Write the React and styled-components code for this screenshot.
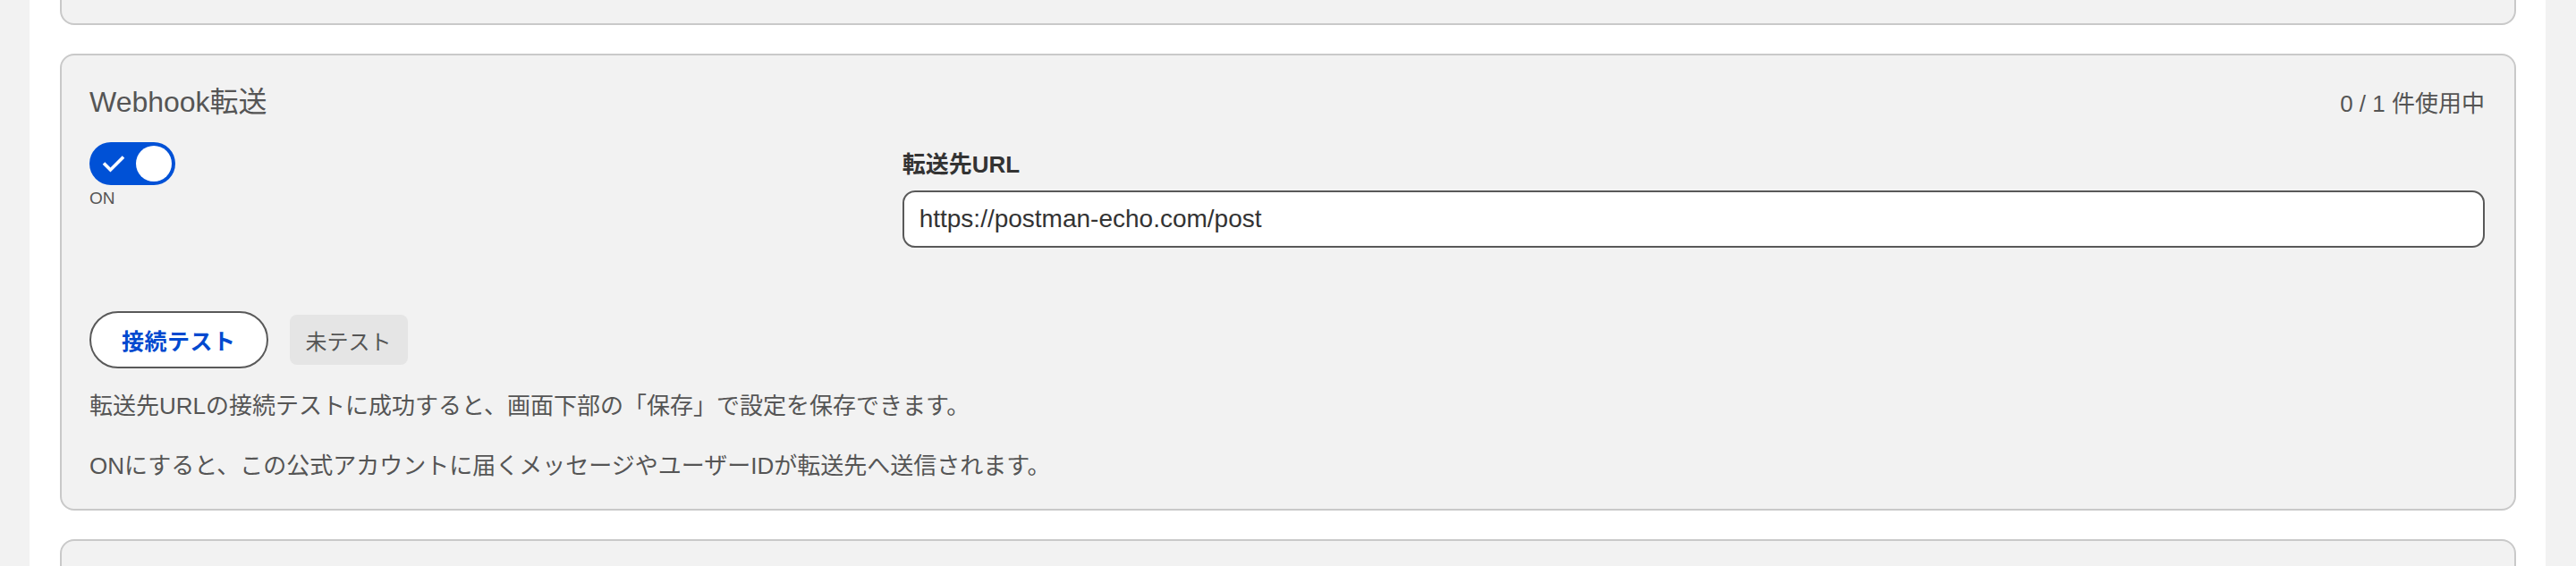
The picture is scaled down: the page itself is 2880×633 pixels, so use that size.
import React from "react";
import styled, { createGlobalStyle } from "styled-components";

const GlobalStyle = createGlobalStyle`
  html, body {
    margin: 0;
    padding: 0;
    background: #f2f2f2;
  }
  body {
    font-family: "Liberation Sans", "Noto Sans CJK JP", sans-serif;
    overflow: hidden;
  }
  * { box-sizing: border-box; }
`;

const Page = styled.div`
  height: 633px;
  padding: 0 34px 0 33px;
  background: #f2f2f2;
  overflow: hidden;
`;

const Panel = styled.main`
  height: 100%;
  background: #ffffff;
  padding: 0 33px 0 34px;
  display: flex;
  flex-direction: column;
  gap: 32px;
  overflow: hidden;
`;

const Card = styled.section`
  flex: none;
  background: #f2f2f2;
  border: 2px solid #c9c9c9;
  border-radius: 16px;
  padding: 32px 33px 32px 31px;
  ${(p) => (p.$clipped ? "height: 100px; margin-top: -72px;" : "")}
  ${(p) => (p.$peek ? "height: 200px;" : "")}
`;

const CardHeader = styled.header`
  display: flex;
  justify-content: space-between;
  align-items: baseline;
`;

const Title = styled.h2`
  margin: 0;
  font-size: 32px;
  line-height: 40px;
  font-weight: 400;
  color: #555555;
`;

const Usage = styled.span`
  font-size: 26px;
  line-height: 40px;
  color: #555555;
`;

const SettingsRow = styled.div`
  display: grid;
  grid-template-columns: 1fr 2fr;
  gap: 24px;
  margin-top: 23px;
`;

const ToggleColumn = styled.div`
  display: flex;
  flex-direction: column;
  align-items: flex-start;
  gap: 3px;
`;

const Switch = styled.button`
  width: 96px;
  height: 48px;
  border: none;
  border-radius: 24px;
  background: #0051d6;
  padding: 0 4px 0 14px;
  display: flex;
  align-items: center;
  justify-content: space-between;
  cursor: pointer;
`;

const Knob = styled.span`
  width: 40px;
  height: 40px;
  border-radius: 50%;
  background: #ffffff;
`;

const StateText = styled.span`
  font-size: 19px;
  line-height: 24px;
  color: #555555;
`;

const FieldColumn = styled.div`
  padding-top: 8px;
  display: flex;
  flex-direction: column;
  gap: 12px;
`;

const Label = styled.label`
  font-size: 26px;
  line-height: 34px;
  font-weight: 700;
  color: #333333;
`;

const UrlInput = styled.input`
  width: 100%;
  height: 64px;
  border: 2px solid #595959;
  border-radius: 14px;
  background: #ffffff;
  padding: 0 17px;
  font-family: "Liberation Sans", "Noto Sans CJK JP", sans-serif;
  font-size: 28px;
  color: #333333;
  outline: none;
`;

const ActionRow = styled.div`
  display: flex;
  align-items: center;
  gap: 24px;
  margin-top: 71px;
`;

const TestButton = styled.button`
  height: 64px;
  padding: 0 34px;
  border: 2px solid #595959;
  border-radius: 32px;
  background: #ffffff;
  color: #0049cf;
  font-family: "Liberation Sans", "Noto Sans CJK JP", sans-serif;
  font-size: 25px;
  font-weight: 700;
  letter-spacing: 0.5px;
  cursor: pointer;
`;

const StatusBadge = styled.span`
  height: 56px;
  padding: 0 18px;
  border-radius: 8px;
  background: #e5e5e5;
  color: #555555;
  font-size: 24px;
  display: inline-flex;
  align-items: center;
`;

const Note = styled.p`
  margin: ${(p) => (p.$first ? "26px" : "35px")} 0 0;
  font-size: 26px;
  line-height: 32px;
  color: #555555;
`;

function CheckIcon() {
  return (
    <svg width="26" height="20" viewBox="0 0 26 20" aria-hidden="true">
      <path
        d="M2 9.5 L9.5 17 L24 2.5"
        fill="none"
        stroke="#ffffff"
        strokeWidth="3.6"
        strokeLinecap="butt"
        strokeLinejoin="miter"
      />
    </svg>
  );
}

export default function App() {
  return (
    <>
      <GlobalStyle />
      <Page>
        <Panel>
          <Card $clipped />
          <Card>
            <CardHeader>
              <Title>Webhook転送</Title>
              <Usage>0 / 1 件使用中</Usage>
            </CardHeader>
            <SettingsRow>
              <ToggleColumn>
                <Switch type="button" role="switch" aria-checked="true">
                  <CheckIcon />
                  <Knob />
                </Switch>
                <StateText>ON</StateText>
              </ToggleColumn>
              <FieldColumn>
                <Label htmlFor="webhook-url">転送先URL</Label>
                <UrlInput
                  id="webhook-url"
                  type="text"
                  defaultValue="https://postman-echo.com/post"
                />
              </FieldColumn>
            </SettingsRow>
            <ActionRow>
              <TestButton type="button">接続テスト</TestButton>
              <StatusBadge>未テスト</StatusBadge>
            </ActionRow>
            <Note $first>
              転送先URLの接続テストに成功すると、画面下部の「保存」で設定を保存できます。
            </Note>
            <Note>
              ONにすると、この公式アカウントに届くメッセージやユーザーIDが転送先へ送信されます。
            </Note>
          </Card>
          <Card $peek />
        </Panel>
      </Page>
    </>
  );
}
